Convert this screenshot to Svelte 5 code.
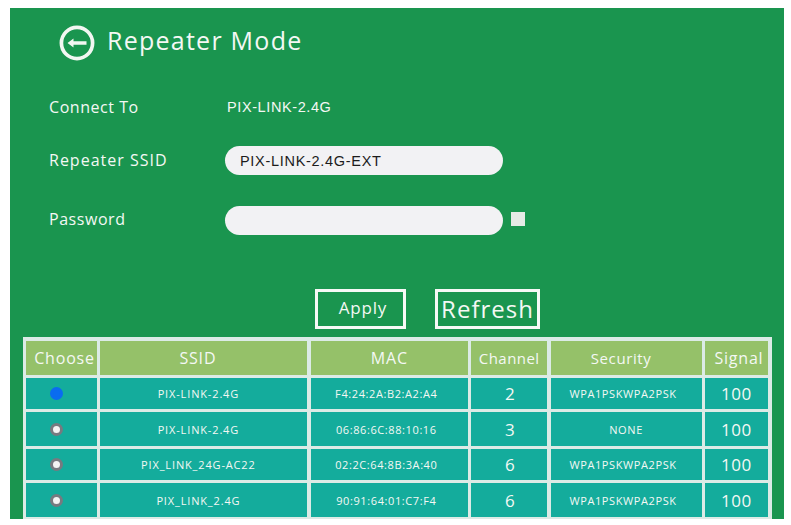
<script lang="ts">
	const columns = [
		{ name: 'Choose', cls: 'c-choose' },
		{ name: 'SSID', cls: 'c-ssid' },
		{ name: 'MAC', cls: 'c-mac' },
		{ name: 'Channel', cls: 'c-channel' },
		{ name: 'Security', cls: 'c-security' },
		{ name: 'Signal', cls: 'c-signal' }
	];
	const rows = [
		{ ssid: 'PIX-LINK-2.4G', mac: 'F4:24:2A:B2:A2:A4', channel: 2, security: 'WPA1PSKWPA2PSK', signal: 100, selected: true },
		{ ssid: 'PIX-LINK-2.4G', mac: '06:86:6C:88:10:16', channel: 3, security: 'NONE', signal: 100, selected: false },
		{ ssid: 'PIX_LINK_24G-AC22', mac: '02:2C:64:8B:3A:40', channel: 6, security: 'WPA1PSKWPA2PSK', signal: 100, selected: false },
		{ ssid: 'PIX_LINK_2.4G', mac: '90:91:64:01:C7:F4', channel: 6, security: 'WPA1PSKWPA2PSK', signal: 100, selected: false }
	];
</script>

<div class="panel">
	<header class="title">
		<svg class="back" width="36" height="36" viewBox="0 0 36 36" aria-hidden="true">
			<circle cx="18" cy="18" r="15.6" fill="none" stroke="#f2f7f2" stroke-width="3.7" />
			<path d="M14.5 13.5 L8.5 18 L14.5 22.5 L14.5 19.7 L27.5 19.7 L27.5 16.3 L14.5 16.3 Z" fill="#f2f7f2" />
		</svg>
		<h1>Repeater Mode</h1>
	</header>

	<div class="form">
		<span class="label">Connect To</span>
		<span class="value">PIX-LINK-2.4G</span>

		<span class="label wide">Repeater SSID</span>
		<div class="field-row">
			<div class="pill">PIX-LINK-2.4G-EXT</div>
		</div>

		<span class="label pw">Password</span>
		<div class="field-row">
			<div class="pill"></div>
			<div class="check"></div>
		</div>
	</div>

	<div class="actions">
		<div class="btn apply">Apply</div>
		<div class="btn refresh">Refresh</div>
	</div>

	<div class="table">
		{#each columns as col}
			<div class="th {col.cls}"><span>{col.name}</span></div>
		{/each}
		{#each rows as row}
			<div class="td">
				<span class="radio" class:on={row.selected}></span>
			</div>
			<div class="td small c-ssid-cell">{row.ssid}</div>
			<div class="td small c-mac-cell">{row.mac}</div>
			<div class="td big c-chan-cell">{row.channel}</div>
			<div class="td small" class:c-sec-cell={row.security !== 'NONE'}>{row.security}</div>
			<div class="td big">{row.signal}</div>
		{/each}
	</div>
</div>

<style>
	:global(body) {
		background: #fff;
		font-family: 'Open Sans', 'Noto Sans', sans-serif;
	}

	.panel {
		box-sizing: border-box;
		width: 774px;
		height: 511px;
		margin: 8px 0 0 10px;
		padding-left: 13px;
		background: #1a954f;
		display: flex;
		flex-direction: column;
		color: #f4f8f4;
	}

	.title {
		display: flex;
		align-items: center;
		gap: 12px;
		height: 36px;
		margin: 17px 0 0 36px;
	}

	.back {
		flex-shrink: 0;
	}

	h1 {
		margin: 0 0 6px;
		font-size: 25px;
		font-weight: 400;
		letter-spacing: 1.25px;
		line-height: 36px;
	}

	.form {
		display: grid;
		grid-template-columns: 176px 1fr;
		grid-template-rows: 30px 53px 60px;
		align-items: end;
		margin: 31px 0 0 26px;
	}

	.label {
		font-size: 16px;
		letter-spacing: 0.55px;
		line-height: 28px;
		padding-bottom: 1px;
	}

	.label.wide {
		letter-spacing: 1px;
	}

	.label.pw {
		padding-bottom: 2px;
	}

	.value {
		font-family: 'Liberation Sans', sans-serif;
		font-size: 14.5px;
		letter-spacing: 0.6px;
		line-height: 29px;
		padding-left: 2px;
	}

	.field-row {
		display: flex;
		align-items: center;
		gap: 8px;
	}

	.pill {
		box-sizing: border-box;
		width: 278px;
		height: 29px;
		border-radius: 15px;
		background: #f2f2f4;
		color: #1c1c1c;
		font-family: 'Liberation Sans', sans-serif;
		font-size: 14.5px;
		letter-spacing: 0.7px;
		line-height: 30px;
		padding-left: 15px;
	}

	.check {
		width: 14px;
		height: 14px;
		margin-bottom: 3px;
		background: #e6ebe6;
	}

	.actions {
		display: flex;
		gap: 29px;
		margin: 54px 0 0 292px;
		height: 40px;
	}

	.btn {
		box-sizing: border-box;
		height: 40px;
		border: 3px solid #f6f9f6;
		display: flex;
		align-items: center;
		justify-content: center;
	}

	.apply {
		width: 91px;
		padding: 0 0 3px 5px;
		font-size: 17px;
		letter-spacing: 0.8px;
	}

	.refresh {
		width: 105px;
		padding-bottom: 2px;
		font-size: 24px;
		letter-spacing: 1px;
	}

	.table {
		box-sizing: border-box;
		width: 749px;
		height: 182px;
		margin-top: 8px;
		padding: 4px 0 2px 3px;
		display: grid;
		grid-template-columns: 71px 207px 157px 76px 151px 63px;
		grid-template-rows: 34px 31px 34px 31px 34px;
		gap: 3px 3.4px;
		background: #dcebe6;
	}

	.th {
		background: #95c169;
		display: flex;
		align-items: center;
		justify-content: center;
		font-size: 16px;
		letter-spacing: 0.8px;
		white-space: nowrap;
		overflow: hidden;
	}

	.c-choose {
		padding-left: 6px;
	}

	.c-ssid {
		padding-right: 12px;
	}

	.c-channel {
		font-size: 15px;
		letter-spacing: 0.45px;
	}

	.c-security {
		padding-right: 10px;
		font-size: 15px;
		letter-spacing: 0.6px;
	}

	.c-signal {
		padding-left: 5px;
	}

	.td {
		background: #14ac9c;
		display: flex;
		align-items: center;
		justify-content: center;
		white-space: nowrap;
	}

	.small {
		font-size: 11px;
		letter-spacing: 0.6px;
	}

	.c-ssid-cell {
		padding-right: 11px;
		letter-spacing: 0.85px;
	}

	.c-mac-cell,
	.c-sec-cell {
		padding-right: 6px;
	}

	.big {
		font-size: 17px;
		letter-spacing: 0.6px;
	}

	.c-chan-cell {
		padding-left: 2px;
	}

	.radio {
		box-sizing: border-box;
		width: 13px;
		height: 13px;
		border-radius: 50%;
		background: #f4f4f4;
		border: 3px solid #777a80;
		margin-right: 10px;
	}

	.radio.on {
		background: #0a6cf0;
		border-color: #0a6cf0;
	}
</style>
